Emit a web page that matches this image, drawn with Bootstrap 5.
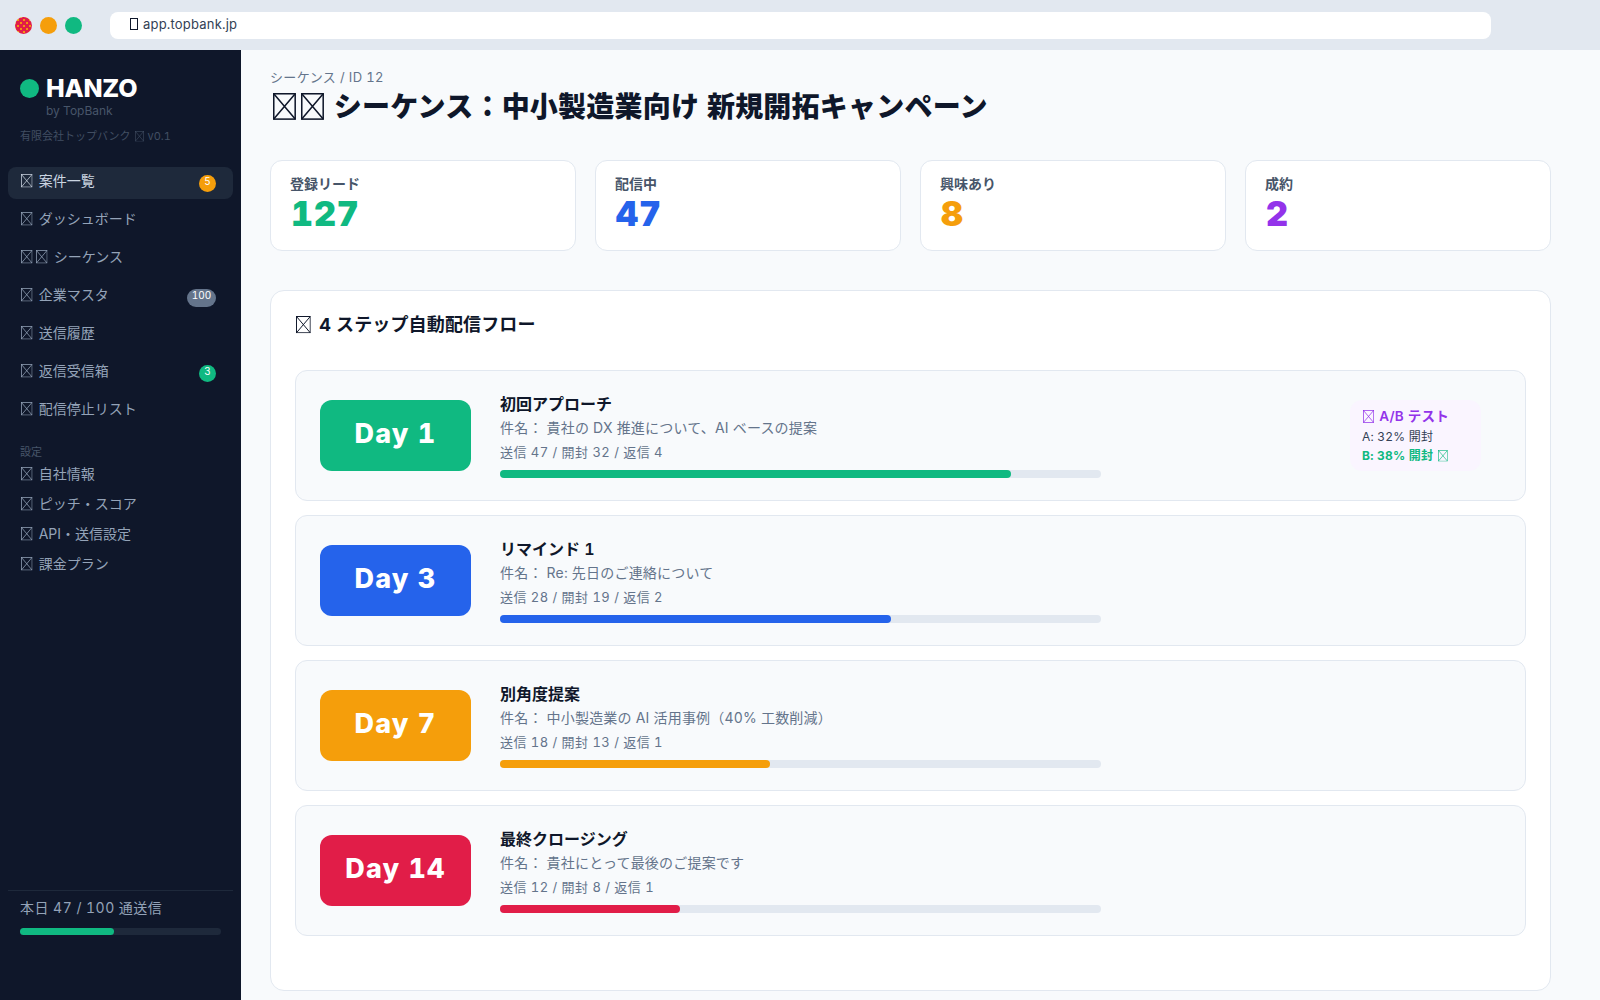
<!DOCTYPE html>
<html lang="ja">
<head>
<meta charset="utf-8">
<title>HANZO</title>
<link href="https://cdn.jsdelivr.net/npm/bootstrap@5.3.0/dist/css/bootstrap.min.css" rel="stylesheet">
<style>
html,body{height:1000px;overflow:hidden}
body{font-family:Inter,"Noto Sans CJK JP",sans-serif;background:#f8fafc;color:#0f172a;font-optical-sizing:none;font-variant-numeric:tabular-nums}
.tofu{width:.82em;height:.96em;margin:0 .08em 0 .1em;vertical-align:-.12em;overflow:visible}
.tofu-lock{display:inline-block;width:8px;height:12px;border:1.4px solid #0f172a;vertical-align:-1px;margin-right:5px}
.chrome-bar{height:50px;background:#e2e8f0;padding:0 15px}
.win-dot{width:17px;height:17px;border-radius:50%}
.dot-red{background-color:#e11d48;background-image:radial-gradient(#f59e0b .7px,transparent .8px),radial-gradient(#f59e0b .7px,transparent .8px);background-size:6px 6px;background-position:0 0,3px 3px}
.dot-amber{background:#f59e0b}
.dot-green{background:#10b981}
.url-box{margin-left:28px;width:1381px;height:27px;background:#fff;border-radius:8px;padding-left:20px;font-size:13px;line-height:25px;color:#334155;letter-spacing:.2px}
.app-body{height:950px}
.side-col{width:241px;background:#0f172a;padding:0 8px}
.brand-area{padding:22px 12px 0}
.brand-dot{width:19px;height:19px;border-radius:50%;background:#10b981}
.brand-name{font-size:25px;font-weight:800;line-height:32px;color:#fff;letter-spacing:-.25px;margin-left:-1px}
.brand-by{font-size:12px;line-height:14px;color:#475569;padding-left:26px}
.brand-co{font-size:11px;line-height:14px;color:#414e62;margin-top:11px}
.nav-main{margin-top:24px;gap:6px}
.nav-row{height:32px;padding:0 17px 6px 12px;border-radius:8px;font-size:14px;color:#94a3b8;text-decoration:none}
.nav-row.is-on{background:#1e293b;color:#cbd5e1}
.nav-row .tofu,.nav-sub-row .tofu{margin-right:.15em}
.nav-count{margin-left:auto;min-width:17px;height:17px;border-radius:9px;color:#fff;font-size:10px;line-height:13px;text-align:center;padding:0 4px;margin-top:7px}
.count-amber{background:#f59e0b}
.count-gray{background:#64748b;min-width:29px;height:18px}
.count-green{background:#10b981}
.side-label{font-size:11px;line-height:14px;color:#475569;padding:0 12px;margin-top:18px}
.nav-sub{margin-top:1px}
.nav-sub-row{height:30px;padding:0 12px 3px;font-size:14px;color:#94a3b8;text-decoration:none}
.side-foot{margin-top:auto;margin-bottom:65px;border-top:1px solid #1e293b;padding:7px 12px 0}
.foot-text{font-size:14px;line-height:20px;color:#94a3b8;letter-spacing:.45px}
.foot-track{height:7px;border-radius:4px;background:#1e293b;margin-top:10px}
.foot-fill{height:100%;border-radius:4px;background:#10b981}
.main-col{padding:18px 49px 0 29px}
.crumb{font-size:13px;line-height:18px;color:#64748b;letter-spacing:.35px}
.page-title{font-size:28px;font-weight:800;line-height:38px;margin:2px 0 34px;color:#0f172a;letter-spacing:.22px}
.stat-row{gap:19px}
.stat-box{flex:1 1 0;height:91px;background:#fff;border:1px solid #e2e8f0;border-radius:12px;padding:14px 19px}
.stat-label{font-size:14px;font-weight:600;line-height:18px;color:#475569}
.stat-value{font-size:34px;font-weight:900;line-height:40px;letter-spacing:1px;margin:1px 0 0 1px}
.tone-green{color:#10b981}.tone-blue{color:#2563eb}.tone-amber{color:#f59e0b}.tone-purple{color:#9333ea}
.flow-card{background:#fff;border:1px solid #e2e8f0;border-radius:14px;margin-top:39px;height:701px;padding:21px 24px 0}
.flow-title{font-size:18px;font-weight:700;line-height:26px;margin:0 0 32px;color:#0f172a;letter-spacing:.15px}
.flow-title .tofu{margin:0 .2em 0 .05em}
.step-box{height:131px;background:#f8fafc;border:1px solid #e2e8f0;border-radius:12px;padding:0 24px;margin-bottom:14px}
.day-pill{width:151px;height:71px;border-radius:12px;color:#fff;font-size:27px;font-weight:800;margin-right:29px;letter-spacing:1.1px;padding-bottom:2px}
.bg-g{background:#10b981}.bg-b{background:#2563eb}.bg-a{background:#f59e0b}.bg-r{background:#e11d48}
.step-name{font-size:16px;font-weight:600;line-height:20px;color:#0f172a}
.step-subj{font-size:14px;line-height:20px;color:#64748b;margin-top:4px;letter-spacing:.2px}
.step-nums{font-size:13px;line-height:18px;color:#64748b;margin-top:5px;letter-spacing:.45px}
.step-track{width:601px;height:8px;background:#e2e8f0;border-radius:4px;margin-top:9px}
.step-fill{height:100%;border-radius:4px}
.ab-box{width:131px;height:71px;background:#faf5ff;border-radius:12px;margin-left:auto;margin-right:20px;padding:5px 12px;font-size:12px;line-height:19px;color:#334155;letter-spacing:.2px}
.ab-head{font-size:13.5px;font-weight:600;color:#9333ea;line-height:22px}
.ab-win{font-weight:700;color:#10b981}
</style>
</head>
<body>
<svg width="0" height="0" class="position-absolute"><symbol id="box-x" viewBox="0 0 12 14" preserveAspectRatio="none"><g fill="none" stroke="currentColor" stroke-width=".8"><rect x=".4" y=".4" width="11.2" height="13.2"/><path d="M.4.4 11.6 13.6M11.6.4.4 13.6"/></g></symbol></svg>
<div class="chrome-bar d-flex align-items-center">
  <div class="d-flex gap-2"><span class="win-dot dot-red"></span><span class="win-dot dot-amber"></span><span class="win-dot dot-green"></span></div>
  <div class="url-box"><span class="tofu-lock"></span>app.topbank.jp</div>
</div>
<div class="app-body d-flex">
  <aside class="side-col d-flex flex-column flex-shrink-0">
    <div class="brand-area">
      <div class="d-flex align-items-center gap-2"><span class="brand-dot"></span><span class="brand-name">HANZO</span></div>
      <div class="brand-by">by TopBank</div>
      <div class="brand-co">有限会社トップバンク <svg class="tofu"><use href="#box-x"/></svg> v0.1</div>
    </div>
    <nav class="nav-main d-flex flex-column">
      <a class="nav-row is-on d-flex align-items-center" href="#"><span><svg class="tofu"><use href="#box-x"/></svg> 案件一覧</span><span class="nav-count count-amber">5</span></a>
      <a class="nav-row d-flex align-items-center" href="#"><span><svg class="tofu"><use href="#box-x"/></svg> ダッシュボード</span></a>
      <a class="nav-row d-flex align-items-center" href="#"><span><svg class="tofu"><use href="#box-x"/></svg><svg class="tofu"><use href="#box-x"/></svg> シーケンス</span></a>
      <a class="nav-row d-flex align-items-center" href="#"><span><svg class="tofu"><use href="#box-x"/></svg> 企業マスタ</span><span class="nav-count count-gray">100</span></a>
      <a class="nav-row d-flex align-items-center" href="#"><span><svg class="tofu"><use href="#box-x"/></svg> 送信履歴</span></a>
      <a class="nav-row d-flex align-items-center" href="#"><span><svg class="tofu"><use href="#box-x"/></svg> 返信受信箱</span><span class="nav-count count-green">3</span></a>
      <a class="nav-row d-flex align-items-center" href="#"><span><svg class="tofu"><use href="#box-x"/></svg> 配信停止リスト</span></a>
    </nav>
    <div class="side-label">設定</div>
    <nav class="nav-sub d-flex flex-column">
      <a class="nav-sub-row d-flex align-items-center" href="#"><span><svg class="tofu"><use href="#box-x"/></svg> 自社情報</span></a>
      <a class="nav-sub-row d-flex align-items-center" href="#"><span><svg class="tofu"><use href="#box-x"/></svg> ピッチ・スコア</span></a>
      <a class="nav-sub-row d-flex align-items-center" href="#"><span><svg class="tofu"><use href="#box-x"/></svg> API・送信設定</span></a>
      <a class="nav-sub-row d-flex align-items-center" href="#"><span><svg class="tofu"><use href="#box-x"/></svg> 課金プラン</span></a>
    </nav>
    <div class="side-foot">
      <div class="foot-text">本日 47 / 100 通送信</div>
      <div class="foot-track"><div class="foot-fill" style="width:47%"></div></div>
    </div>
  </aside>
  <main class="main-col flex-grow-1">
    <div class="crumb">シーケンス / ID 12</div>
    <h1 class="page-title"><svg class="tofu"><use href="#box-x"/></svg><svg class="tofu"><use href="#box-x"/></svg> シーケンス：中小製造業向け 新規開拓キャンペーン</h1>
    <div class="stat-row d-flex">
      <div class="stat-box"><div class="stat-label">登録リード</div><div class="stat-value tone-green">127</div></div>
      <div class="stat-box"><div class="stat-label">配信中</div><div class="stat-value tone-blue">47</div></div>
      <div class="stat-box"><div class="stat-label">興味あり</div><div class="stat-value tone-amber">8</div></div>
      <div class="stat-box"><div class="stat-label">成約</div><div class="stat-value tone-purple">2</div></div>
    </div>
    <section class="flow-card">
      <h2 class="flow-title"><svg class="tofu"><use href="#box-x"/></svg> 4 ステップ自動配信フロー</h2>
      <div class="step-box d-flex align-items-center">
        <div class="day-pill bg-g d-flex align-items-center justify-content-center">Day 1</div>
        <div>
          <div class="step-name">初回アプローチ</div>
          <div class="step-subj">件名： 貴社の DX 推進について、AI ベースの提案</div>
          <div class="step-nums">送信 47 / 開封 32 / 返信 4</div>
          <div class="step-track"><div class="step-fill bg-g" style="width:85%"></div></div>
        </div>
        <div class="ab-box">
          <div class="ab-head"><svg class="tofu"><use href="#box-x"/></svg> A/B テスト</div>
          <div>A: 32% 開封</div>
          <div class="ab-win">B: 38% 開封 <svg class="tofu"><use href="#box-x"/></svg></div>
        </div>
      </div>
      <div class="step-box d-flex align-items-center">
        <div class="day-pill bg-b d-flex align-items-center justify-content-center">Day 3</div>
        <div>
          <div class="step-name">リマインド 1</div>
          <div class="step-subj">件名： Re: 先日のご連絡について</div>
          <div class="step-nums">送信 28 / 開封 19 / 返信 2</div>
          <div class="step-track"><div class="step-fill bg-b" style="width:65%"></div></div>
        </div>
      </div>
      <div class="step-box d-flex align-items-center">
        <div class="day-pill bg-a d-flex align-items-center justify-content-center">Day 7</div>
        <div>
          <div class="step-name">別角度提案</div>
          <div class="step-subj">件名： 中小製造業の AI 活用事例（40% 工数削減）</div>
          <div class="step-nums">送信 18 / 開封 13 / 返信 1</div>
          <div class="step-track"><div class="step-fill bg-a" style="width:45%"></div></div>
        </div>
      </div>
      <div class="step-box d-flex align-items-center">
        <div class="day-pill bg-r d-flex align-items-center justify-content-center">Day 14</div>
        <div>
          <div class="step-name">最終クロージング</div>
          <div class="step-subj">件名： 貴社にとって最後のご提案です</div>
          <div class="step-nums">送信 12 / 開封 8 / 返信 1</div>
          <div class="step-track"><div class="step-fill bg-r" style="width:30%"></div></div>
        </div>
      </div>
    </section>
  </main>
</div>
<script src="https://cdn.jsdelivr.net/npm/bootstrap@5.3.0/dist/js/bootstrap.bundle.min.js"></script>
</body>
</html>
